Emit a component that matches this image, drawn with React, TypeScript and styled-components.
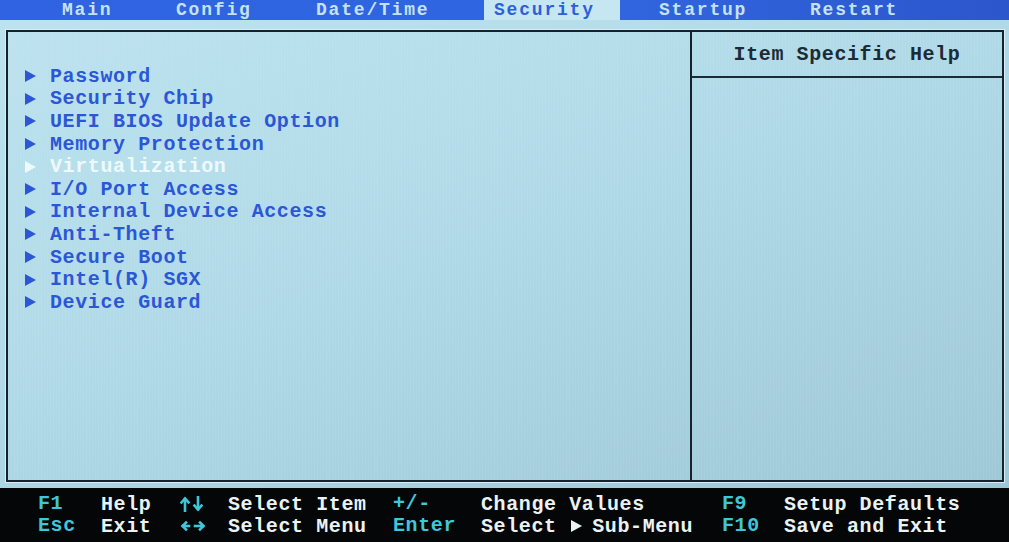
import React from "react";
import styled, { createGlobalStyle } from "styled-components";

const GlobalStyle = createGlobalStyle`
  html, body {
    margin: 0;
    padding: 0;
    background: #0a0a0a;
  }
  body {
    font-family: "Liberation Mono", "DejaVu Sans Mono", monospace;
  }
`;

const Screen = styled.div`
  width: 1009px;
  height: 542px;
  overflow: hidden;
  display: flex;
  flex-direction: column;
  background: linear-gradient(160deg, #bde3ef 0%, #b0d9e7 45%, #9cc6d4 100%);
  font-family: "Liberation Mono", "DejaVu Sans Mono", monospace;
  font-weight: bold;
  font-size: 20px;
  letter-spacing: 0.6px;
`;

const TabBar = styled.div`
  height: 20px;
  flex-shrink: 0;
  display: flex;
  padding-left: 52px;
  background: linear-gradient(90deg, #2f63e2 0%, #3066e0 60%, #2c56cc 100%);
`;

const Tab = styled.div<{ $w: number; $active?: boolean; $ml?: number }>`
  width: ${(p) => p.$w}px;
  margin-left: ${(p) => p.$ml ?? 0}px;
  padding-left: 10px;
  box-sizing: border-box;
  height: 20px;
  font-size: 18px;
  line-height: 20px;
  white-space: pre;
  letter-spacing: 1.8px;
  color: ${(p) => (p.$active ? "#2d5fd8" : "#c4e2f2")};
  background: ${(p) => (p.$active ? "#c6e7f1" : "transparent")};
`;

const Body = styled.div`
  flex: 1;
  padding: 10px 5px 6px 6px;
  display: flex;
  min-height: 0;
`;

const Panel = styled.div`
  flex: 1;
  display: grid;
  grid-template-columns: 682px 2px 1fr;
  border: 2px solid #15222e;
  box-shadow: 0 0 0 1px #d6eef6;
  background-image: repeating-linear-gradient(
    90deg,
    rgba(255, 255, 255, 0.05) 0 1px,
    transparent 1px 3px
  );
`;

const MenuList = styled.ul`
  list-style: none;
  margin: 0;
  padding: 33px 0 0 17px;
`;

const MenuItem = styled.li<{ $active?: boolean }>`
  display: flex;
  align-items: center;
  height: 22.6px;
  color: ${(p) => (p.$active ? "#eef9fd" : "#2b57d6")};
  white-space: pre;
`;

const Arrow = styled.span<{ $color: string; $gap?: string }>`
  width: 0;
  height: 0;
  border-top: 6px solid transparent;
  border-bottom: 6px solid transparent;
  border-left: 11px solid ${(p) => p.$color};
  margin: ${(p) => p.$gap ?? "0 14px 0 0"};
  flex-shrink: 0;
`;

const Divider = styled.div`
  background: #15222e;
`;

const HelpColumn = styled.div`
  display: flex;
  flex-direction: column;
`;

const HelpHeader = styled.div`
  height: 44px;
  display: flex;
  align-items: center;
  justify-content: center;
  color: #1c2a36;
  border-bottom: 2px solid #1a2a38;
  white-space: pre;
`;

const Footer = styled.div`
  height: 54px;
  flex-shrink: 0;
  background: #050608;
  padding: 5px 0 0 38px;
  box-sizing: border-box;
  display: grid;
  grid-template-columns: 63px 79px 48px 165px 88px 241px 62px auto;
  grid-auto-rows: 22px;
  align-items: center;
`;

const Key = styled.span`
  color: #3fc6d8;
  white-space: pre;
  line-height: 22px;
`;

const IconKey = styled.span`
  display: flex;
  align-items: center;
  color: #3fc6d8;
  height: 22px;
`;

const Desc = styled.span`
  color: #e9f3f4;
  white-space: pre;
  display: flex;
  align-items: center;
`;

const UpDownIcon = () => (
  <svg width="24" height="16" viewBox="0 0 24 16" fill="none">
    <g stroke="currentColor" strokeWidth="2.6" strokeLinecap="square">
      <path d="M5 15V3" />
      <path d="M1.5 6.5L5 2.5l3.5 4" />
      <path d="M18 1v12" />
      <path d="M14.5 9.5L18 13.5l3.5-4" />
    </g>
  </svg>
);

const LeftRightIcon = () => (
  <svg width="26" height="12" viewBox="0 0 26 12" fill="none">
    <g stroke="currentColor" strokeWidth="2.6" strokeLinecap="square">
      <path d="M3 6h6" />
      <path d="M6 2.5L2.5 6 6 9.5" />
      <path d="M15 6h8" />
      <path d="M20 2.5L23.5 6 20 9.5" />
    </g>
  </svg>
);

const tabs = [
  { label: "Main", w: 114 },
  { label: "Config", w: 140 },
  { label: "Date/Time", w: 178 },
  { label: "Security", w: 136, active: true },
  { label: "Startup", w: 151, ml: 29 },
  { label: "Restart", w: 160 },
];

const items = [
  "Password",
  "Security Chip",
  "UEFI BIOS Update Option",
  "Memory Protection",
  "Virtualization",
  "I/O Port Access",
  "Internal Device Access",
  "Anti-Theft",
  "Secure Boot",
  "Intel(R) SGX",
  "Device Guard",
];

export default function App() {
  return (
    <>
      <GlobalStyle />
      <Screen>
        <TabBar>
          {tabs.map((t) => (
            <Tab key={t.label} $w={t.w} $active={t.active} $ml={t.ml}>
              {t.label}
            </Tab>
          ))}
        </TabBar>
        <Body>
          <Panel>
            <MenuList>
              {items.map((item) => {
                const active = item === "Virtualization";
                return (
                  <MenuItem key={item} $active={active}>
                    <Arrow $color={active ? "#eef9fd" : "#2b57d6"} />
                    {item}
                  </MenuItem>
                );
              })}
            </MenuList>
            <Divider />
            <HelpColumn>
              <HelpHeader>Item Specific Help</HelpHeader>
            </HelpColumn>
          </Panel>
        </Body>
        <Footer>
          <Key>F1</Key>
          <Desc>Help</Desc>
          <IconKey>
            <UpDownIcon />
          </IconKey>
          <Desc>Select Item</Desc>
          <Key>+/-</Key>
          <Desc>Change Values</Desc>
          <Key>F9</Key>
          <Desc>Setup Defaults</Desc>
          <Key>Esc</Key>
          <Desc>Exit</Desc>
          <IconKey>
            <LeftRightIcon />
          </IconKey>
          <Desc>Select Menu</Desc>
          <Key>Enter</Key>
          <Desc>
            Select <Arrow $color="#e9f3f4" $gap="0 10px 0 2px" />
            Sub-Menu
          </Desc>
          <Key>F10</Key>
          <Desc>Save and Exit</Desc>
        </Footer>
      </Screen>
    </>
  );
}
